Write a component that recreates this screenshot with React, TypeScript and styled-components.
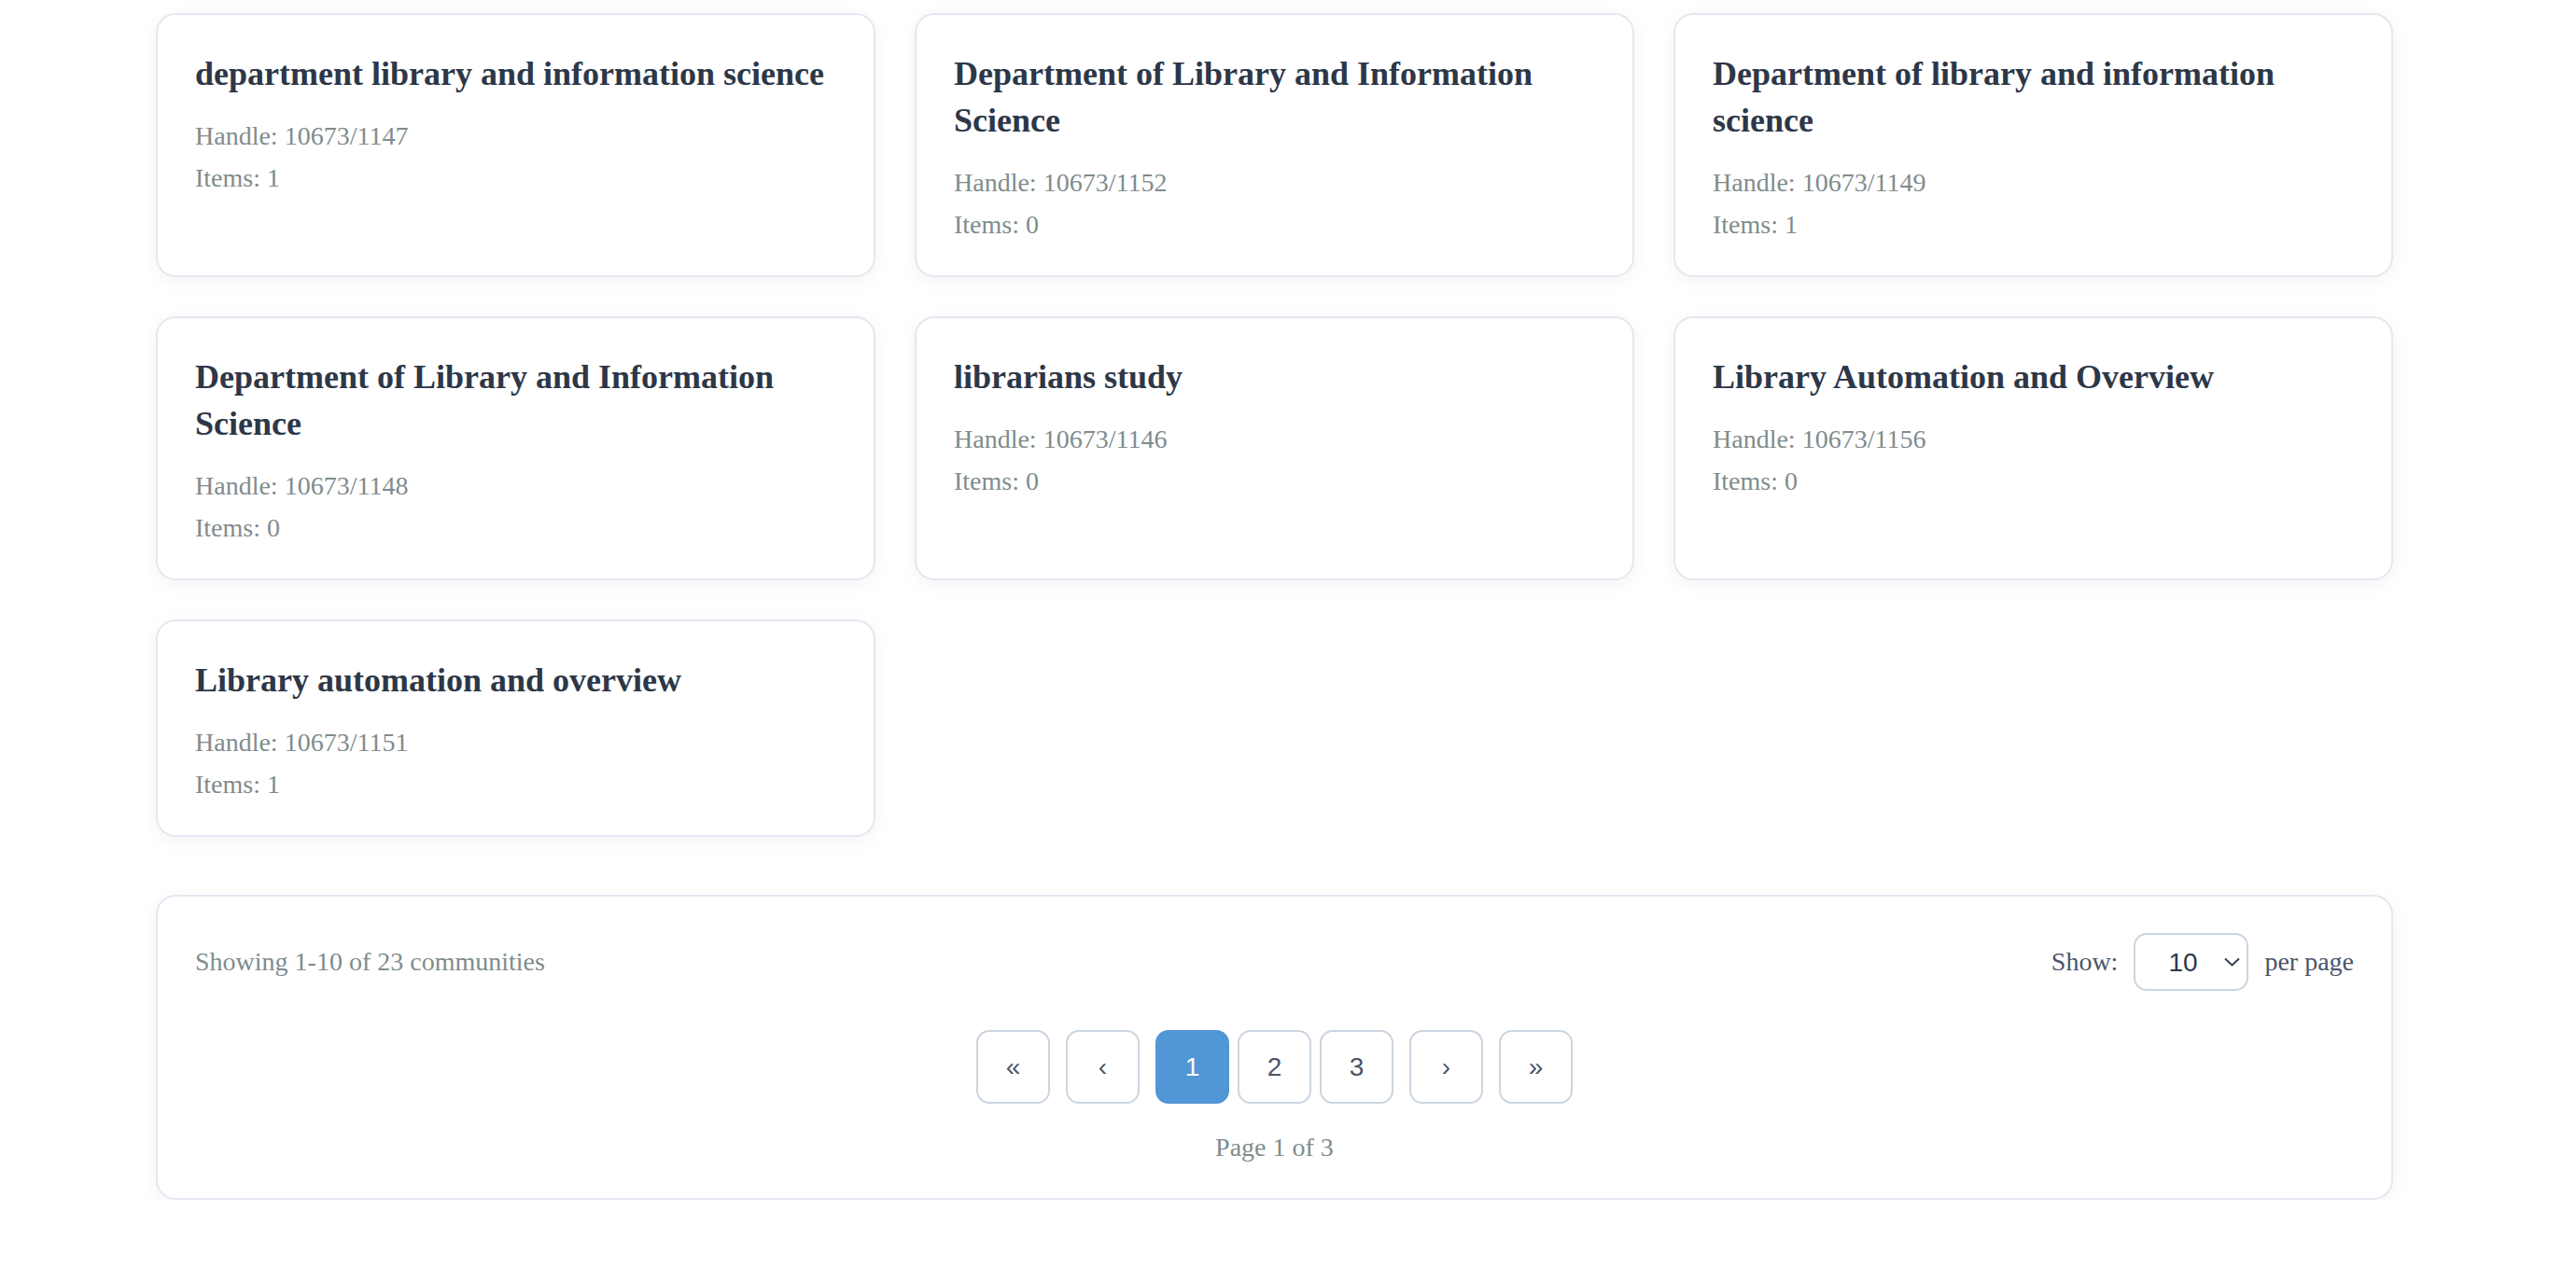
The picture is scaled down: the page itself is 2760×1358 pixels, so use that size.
import React from "react";
import styled, { createGlobalStyle } from "styled-components";

const communities = [
  { name: "department library and information science", handle: "10673/1147", items: 1 },
  { name: "Department of Library and Information Science", handle: "10673/1152", items: 0 },
  { name: "Department of library and information science", handle: "10673/1149", items: 1 },
  { name: "Department of Library and Information Science", handle: "10673/1148", items: 0 },
  { name: "librarians study", handle: "10673/1146", items: 0 },
  { name: "Library Automation and Overview", handle: "10673/1156", items: 0 },
  { name: "Library automation and overview", handle: "10673/1151", items: 1 },
];

export default function App() {
  return (
    <Page>
      <GlobalStyle />
      <Grid>
        {communities.map((c) => (
          <Card key={c.handle}>
            <CardTitle>{c.name}</CardTitle>
            <Meta>Handle: {c.handle}</Meta>
            <Meta>Items: {c.items}</Meta>
          </Card>
        ))}
      </Grid>
      <PaginationBox>
        <TopRow>
          <Summary>Showing 1-10 of 23 communities</Summary>
          <PerPage>
            <span>Show:</span>
            <SelectWrap>
              <Select defaultValue="10">
                <option value="10">10</option>
                <option value="20">20</option>
                <option value="50">50</option>
              </Select>
              <Chevron width="17" height="10" viewBox="0 0 17 10">
                <polyline points="1,1.5 8.5,8.5 16,1.5" fill="none" stroke="#2d3748" strokeWidth="1.8" />
              </Chevron>
            </SelectWrap>
            <span>per page</span>
          </PerPage>
        </TopRow>
        <Pager>
          <PageButton>«</PageButton>
          <PageButton>‹</PageButton>
          <Numbers>
            <PageButton $active>1</PageButton>
            <PageButton>2</PageButton>
            <PageButton>3</PageButton>
          </Numbers>
          <PageButton>›</PageButton>
          <PageButton>»</PageButton>
        </Pager>
        <PageInfo>Page 1 of 3</PageInfo>
      </PaginationBox>
    </Page>
  );
}

const GlobalStyle = createGlobalStyle`
  html, body {
    margin: 0;
    padding: 0;
    background: #ffffff;
    font-family: "Liberation Serif", "Times New Roman", serif;
  }
  * {
    box-sizing: border-box;
  }
`;

const Page = styled.div`
  width: 2564px;
  padding: 14px 0 0 167px;
`;

const Grid = styled.div`
  display: grid;
  grid-template-columns: repeat(3, 1fr);
  column-gap: 42px;
  row-gap: 42px;
`;

const Card = styled.div`
  background: #ffffff;
  border: 2px solid #e2e8f0;
  border-radius: 21px;
  padding: 38px 40px 39px;
  box-shadow: 0 4px 20px rgba(0, 0, 0, 0.05);
`;

const CardTitle = styled.h3`
  margin: 0 0 26px;
  font-size: 36px;
  line-height: 50px;
  font-weight: bold;
  color: #2d3748;
`;

const Meta = styled.p`
  margin: 0 0 14px;
  font-size: 28px;
  line-height: 31px;
  color: #7f8c8d;
  &:last-child {
    margin-bottom: 0;
  }
`;

const PaginationBox = styled.div`
  margin-top: 62px;
  background: #ffffff;
  border: 2px solid #e2e8f0;
  border-radius: 21px;
  padding: 39px 40px;
  box-shadow: 0 4px 20px rgba(0, 0, 0, 0.05);
`;

const TopRow = styled.div`
  display: flex;
  justify-content: space-between;
  align-items: center;
  height: 62px;
`;

const Summary = styled.span`
  font-size: 28px;
  color: #7f8c8d;
`;

const PerPage = styled.div`
  display: flex;
  align-items: center;
  gap: 17px;
  font-size: 28px;
  color: #4a5568;
`;

const SelectWrap = styled.div`
  position: relative;
  display: flex;
`;

const Select = styled.select`
  appearance: none;
  -webkit-appearance: none;
  width: 123px;
  height: 62px;
  padding: 0 0 0 35px;
  border: 2px solid #cbd5e0;
  border-radius: 14px;
  background: #ffffff;
  font-family: "Liberation Sans", Arial, sans-serif;
  font-size: 28px;
  color: #2d3748;
  outline: none;
`;

const Chevron = styled.svg`
  position: absolute;
  right: 9px;
  top: 26px;
  pointer-events: none;
`;

const Pager = styled.div`
  margin-top: 42px;
  display: flex;
  justify-content: center;
  gap: 17px;
`;

const Numbers = styled.div`
  display: flex;
  gap: 9px;
`;

const PageButton = styled.button<{ $active?: boolean }>`
  width: 79px;
  height: 79px;
  padding: 0;
  border: 2px solid ${(p) => (p.$active ? "#5196d5" : "#cbd5e0")};
  border-radius: 14px;
  background: ${(p) => (p.$active ? "#5196d5" : "#ffffff")};
  color: ${(p) => (p.$active ? "#ffffff" : "#4a5568")};
  font-family: "Liberation Sans", Arial, sans-serif;
  font-size: 28px;
  display: flex;
  align-items: center;
  justify-content: center;
  cursor: pointer;
`;

const PageInfo = styled.p`
  margin: 31px 0 0;
  text-align: center;
  font-size: 28px;
  line-height: 31px;
  color: #7f8c8d;
`;
